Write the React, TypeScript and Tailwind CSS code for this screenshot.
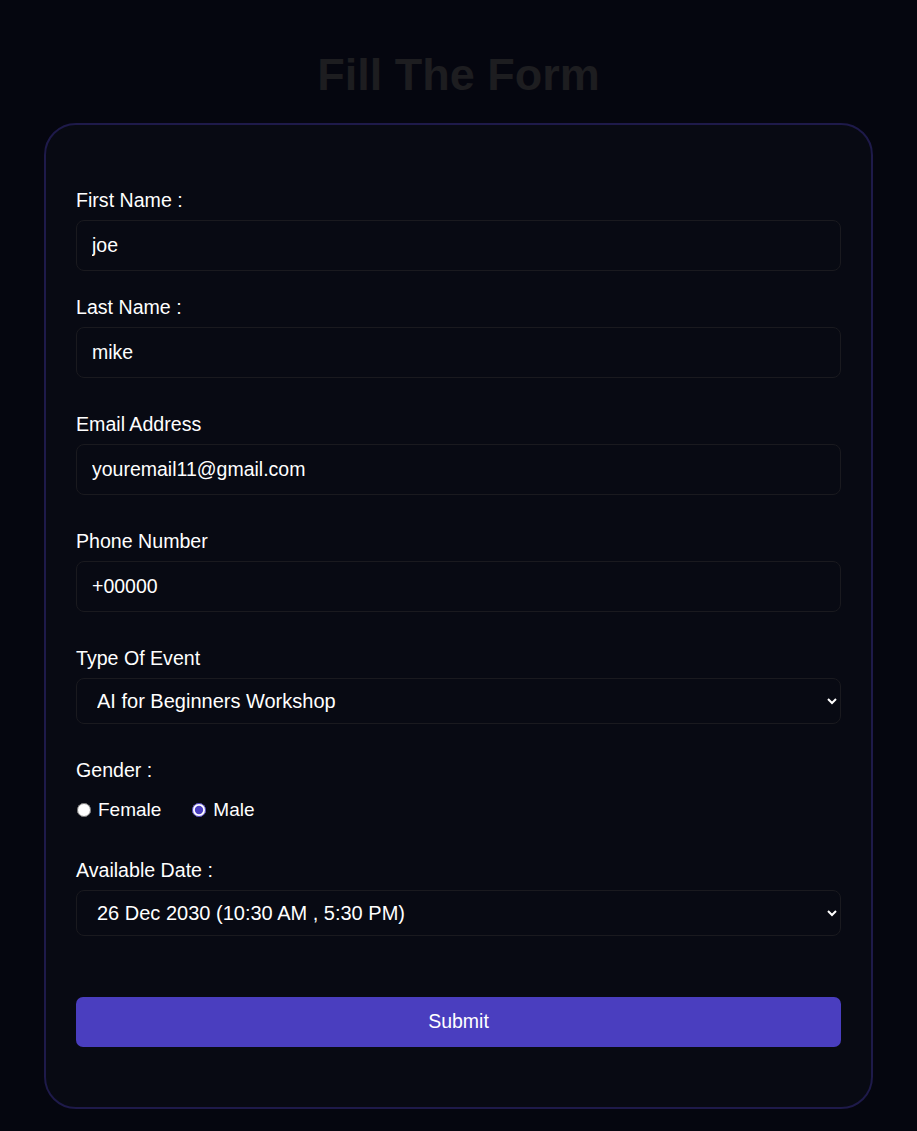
import { useState } from "react";

const font = { fontFamily: '"Liberation Sans", Arial, sans-serif' };

function Field({
  label,
  className,
  children,
}: {
  label: string;
  className?: string;
  children: React.ReactNode;
}) {
  return (
    <div className={`flex flex-col ${className ?? ""}`}>
      <label className="mb-[9px] text-[19.6px] leading-[22px] text-white">{label}</label>
      {children}
    </div>
  );
}

const inputCls =
  "h-[51px] w-full rounded-[8px] border border-[#1a1a1f] bg-[#080a13] pl-[15px] text-[19.5px] text-white outline-none";
const selectCls =
  "h-[46px] w-full rounded-[8px] border border-[#1a1a1f] bg-[#080a13] pl-[16px] pr-[6px] text-[20px] text-white outline-none";

export default function App() {
  const [gender, setGender] = useState("male");

  return (
    <div className="min-h-screen bg-[#05060f] pb-[22px]" style={font}>
      <h1 className="pt-[49px] text-center text-[45px] font-bold leading-[52px] text-[#1d1d20]">
        Fill The Form
      </h1>

      <form
        className="mx-auto mt-[22px] flex w-[829px] flex-col rounded-[32px] border-2 border-[#1e1a4a] bg-[#080a13] px-[30px] pt-[64px] pb-[60px]"
        onSubmit={(e) => e.preventDefault()}
      >
        <Field label="First Name :">
          <input className={inputCls} defaultValue="joe" />
        </Field>
        <Field label="Last Name :" className="mt-[25px]">
          <input className={inputCls} defaultValue="mike" />
        </Field>
        <Field label="Email Address" className="mt-[35px]">
          <input className={inputCls} defaultValue="youremail11@gmail.com" />
        </Field>
        <Field label="Phone Number" className="mt-[35px]">
          <input className={inputCls} defaultValue="+00000" />
        </Field>
        <Field label="Type Of Event" className="mt-[35px]">
          <select className={selectCls} defaultValue="ai">
            <option value="ai">AI for Beginners Workshop</option>
            <option value="web">Web Development Bootcamp</option>
          </select>
        </Field>

        <div className="mt-[35px] text-[19.6px] leading-[22px] text-white">Gender :</div>
        <div className="mt-[18px] flex h-[22px] items-center text-[19px] text-white">
          <label className="flex items-center gap-[7px]">
            <input
              type="radio"
              name="gender"
              className="m-0 ml-[1px] h-[14px] w-[14px] accent-[#4a3ebf]"
              checked={gender === "female"}
              onChange={() => setGender("female")}
            />
            Female
          </label>
          <label className="ml-[31px] flex items-center gap-[7px]">
            <input
              type="radio"
              name="gender"
              className="m-0 h-[14px] w-[14px] accent-[#4a3ebf]"
              checked={gender === "male"}
              onChange={() => setGender("male")}
            />
            Male
          </label>
        </div>

        <Field label="Available Date :" className="mt-[38px]">
          <select className={selectCls} defaultValue="d1">
            <option value="d1">26 Dec 2030 (10:30 AM , 5:30 PM)</option>
            <option value="d2">27 Dec 2030 (10:30 AM , 5:30 PM)</option>
          </select>
        </Field>

        <button
          type="submit"
          className="mt-[61px] h-[50px] w-full rounded-[7px] bg-[#4a3ebf] text-[19.5px] text-white"
        >
          Submit
        </button>
      </form>
    </div>
  );
}
